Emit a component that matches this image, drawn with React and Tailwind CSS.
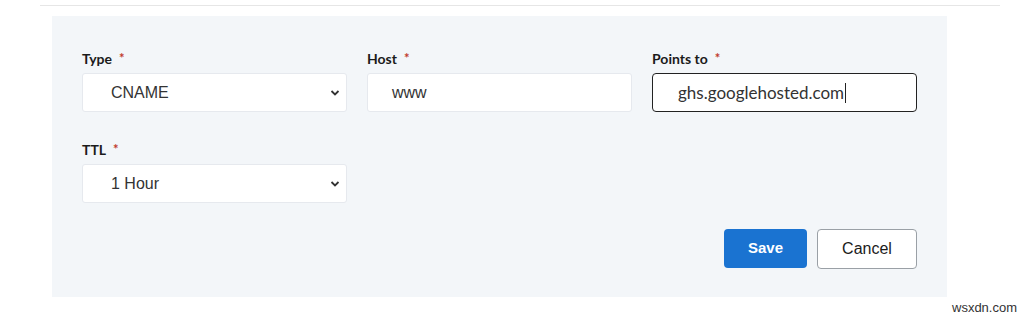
import React from "react";

function Label({ children }) {
  return (
    <div className="flex items-center h-[18px] text-[14px] font-bold text-[#1b1b1b] [font-family:Lato,'Open_Sans',sans-serif]">
      <span>{children}</span>
      <span className="ml-[7px] text-[#c0392b] text-[13px] leading-none mt-[1px]">*</span>
    </div>
  );
}

function Chevron() {
  return (
    <svg width="10" height="7" viewBox="0 0 10 7" className="absolute right-[6px] top-1/2 -translate-y-1/2">
      <path d="M1.5 1.5 L5 5 L8.5 1.5" fill="none" stroke="#333" strokeWidth="1.8" />
    </svg>
  );
}

function SelectBox({ value }) {
  return (
    <div className="relative h-[39px] bg-white border border-[#e6e9ee] rounded-[3px] flex items-center pl-[28px] text-[16px] text-[#333] [font-family:'Liberation_Sans',Arial,sans-serif]">
      {value}
      <Chevron />
    </div>
  );
}

export default function App() {
  return (
    <div className="w-[1025px] h-[320px] bg-white relative overflow-hidden">
      <div className="pt-[5px] pl-[40px] pr-[25px]">
        <div className="h-px bg-[#e6e6e6]" />
      </div>
      <div className="ml-[52px] mt-[10px] w-[895px] h-[281px] bg-[#f3f6f9] pt-[33px] px-[30px]">
        <div className="grid grid-cols-3 gap-x-[20px]">
          <div className="flex flex-col gap-[6px]">
            <Label>Type</Label>
            <SelectBox value="CNAME" />
          </div>
          <div className="flex flex-col gap-[6px]">
            <Label>Host</Label>
            <div className="h-[39px] bg-white border border-[#e6e9ee] rounded-[3px] flex items-center pl-[24px] text-[16px] text-[#333] [font-family:'Liberation_Sans',Arial,sans-serif]">
              www
            </div>
          </div>
          <div className="flex flex-col gap-[6px]">
            <Label>Points to</Label>
            <div className="h-[39px] bg-white border border-[#222] rounded-[4px] flex items-center pl-[25px] text-[17px] text-[#333] [font-family:Lato,'Open_Sans',sans-serif]">
              <span>ghs.googlehosted.com</span>
              <span className="inline-block w-px h-[20px] bg-[#222] ml-[1px]" />
            </div>
          </div>
        </div>
        <div className="grid grid-cols-3 gap-x-[20px] mt-[28px]">
          <div className="flex flex-col gap-[6px]">
            <Label>TTL</Label>
            <SelectBox value="1 Hour" />
          </div>
        </div>
        <div className="flex justify-end gap-[10px] mt-[26px]">
          <button className="w-[83px] h-[39px] rounded-[4px] bg-[#1a73d1] text-white text-[15px] font-bold [font-family:'Liberation_Sans',Arial,sans-serif]">
            Save
          </button>
          <button className="w-[100px] h-[40px] rounded-[4px] bg-white border border-[#9aa0a6] text-[#1b1b1b] text-[16px] [font-family:'Liberation_Sans',Arial,sans-serif]">
            Cancel
          </button>
        </div>
      </div>
      <div className="absolute left-[952px] top-[298px] text-[13px] text-[#333] [font-family:'Liberation_Sans',Arial,sans-serif]">
        wsxdn.com
      </div>
    </div>
  );
}
